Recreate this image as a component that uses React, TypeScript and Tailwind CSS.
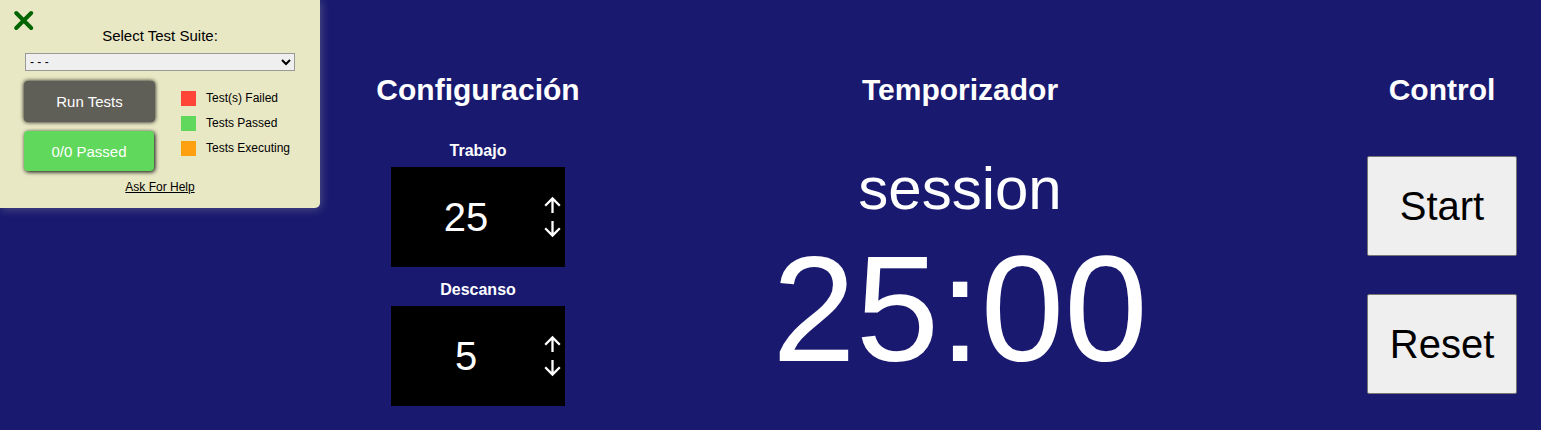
import { useState } from "react";

const legend = [
  { label: "Test(s) Failed", swatch: "bg-[#ff4538]" },
  { label: "Tests Passed", swatch: "bg-[#5fd85c]" },
  { label: "Tests Executing", swatch: "bg-[#ffa010]" },
];

function TestPanel() {
  return (
    <aside className="w-80 shrink-0 self-start rounded-br-[5px] bg-[#e8e8c5] px-6 pb-3 text-black shadow-[1px_1px_10px_rgba(255,255,204,0.25)]">
      <button type="button" aria-label="Close" className="-ml-3 mt-2 block size-6 cursor-pointer">
        <svg viewBox="0 0 24 24" className="size-6" stroke="#006400" strokeWidth="4" strokeLinecap="round">
          <path d="M4.2 5L19.2 20M19.2 5L4.2 20" />
        </svg>
      </button>
      <label htmlFor="suite" className="-mt-1 block text-center text-[15px] leading-4">
        Select Test Suite:
      </label>
      <select
        id="suite"
        className="mx-auto mt-[9px] block h-[18px] w-[270px] border border-[#999] bg-[#efefef] text-xs leading-3"
      >
        <option>- - -</option>
      </select>
      <div className="mt-[10px] flex gap-[26px]">
        <div className="flex w-[131px] flex-col gap-[9px] text-[15px] text-white">
          <button type="button" className="h-[41px] rounded bg-[#5f5e57] pt-px shadow-[0_0_4px_black]">
            Run Tests
          </button>
          <button type="button" className="mr-px h-[40px] rounded bg-[#5fd85c] pt-0.5 shadow-[1px_1px_4px_black]">
            0/0 Passed
          </button>
        </div>
        <ul className="flex flex-col gap-[10px] pt-[10px] text-xs leading-[15px]">
          {legend.map(({ label, swatch }) => (
            <li key={label} className="flex gap-[10px]">
              <span className={`size-[15px] ${swatch}`} />
              {label}
            </li>
          ))}
        </ul>
      </div>
      <a href="#help" className="mt-2 block pb-px text-center text-xs underline">
        Ask For Help
      </a>
    </aside>
  );
}

function Heading({ children }: { children: string }) {
  return <h2 className="text-3xl leading-[34px] font-bold whitespace-nowrap">{children}</h2>;
}

function Arrow({ d }: { d: string }) {
  return (
    <svg viewBox="0 0 24 24" className="size-6" fill="none" stroke="currentColor" strokeWidth="2.3">
      <path d={d} />
    </svg>
  );
}

type StepperProps = { label: string; value: number; onChange: (value: number) => void };

function Stepper({ label, value, onChange }: StepperProps) {
  return (
    <section>
      <h3 className="pb-[7px] text-center text-base leading-[18px] font-bold">{label}</h3>
      <div className="flex h-[100px] w-[174px] items-center bg-black">
        <span className="flex-1 text-center text-[40px]">{value}</span>
        <div className="flex flex-col">
          <button type="button" aria-label={`${label} +`} onClick={() => onChange(Math.min(60, value + 1))}>
            <Arrow d="M4.2 12.7L11.5 5.4L18.8 12.7M11.5 5.4V20" />
          </button>
          <button type="button" aria-label={`${label} -`} onClick={() => onChange(Math.max(1, value - 1))}>
            <Arrow d="M4.2 11.3L11.5 18.6L18.8 11.3M11.5 18.6V4" />
          </button>
        </div>
      </div>
    </section>
  );
}

function ControlButton({ label, onClick }: { label: string; onClick?: () => void }) {
  return (
    <button
      type="button"
      onClick={onClick}
      className="h-[100px] w-[150px] rounded-[2px] border border-[#767676] bg-[#efefef] text-[40px] text-black"
    >
      {label}
    </button>
  );
}

export default function App() {
  const [work, setWork] = useState(25);
  const [rest, setRest] = useState(5);

  return (
    <div className="flex min-h-screen bg-[#191970] font-['Liberation_Sans',Arial,sans-serif] text-white">
      <TestPanel />
      <main className="grid flex-1 grid-cols-[176px_1fr_176px] pt-[73px] pr-[11px] pl-[70px]">
        <div className="flex flex-col items-center">
          <Heading>Configuración</Heading>
          <div className="flex flex-col gap-[14px] pt-[35px]">
            <Stepper label="Trabajo" value={work} onChange={setWork} />
            <Stepper label="Descanso" value={rest} onChange={setRest} />
          </div>
        </div>
        <div className="flex flex-col items-center">
          <Heading>Temporizador</Heading>
          <p className="pt-12 text-6xl leading-[68px]">session</p>
          <p className="text-[150px] leading-[172px]">{String(work).padStart(2, "0")}:00</p>
        </div>
        <div className="flex flex-col items-center">
          <Heading>Control</Heading>
          <div className="flex flex-col gap-[38px] pt-[49px]">
            <ControlButton label="Start" />
            <ControlButton
              label="Reset"
              onClick={() => {
                setWork(25);
                setRest(5);
              }}
            />
          </div>
        </div>
      </main>
    </div>
  );
}
